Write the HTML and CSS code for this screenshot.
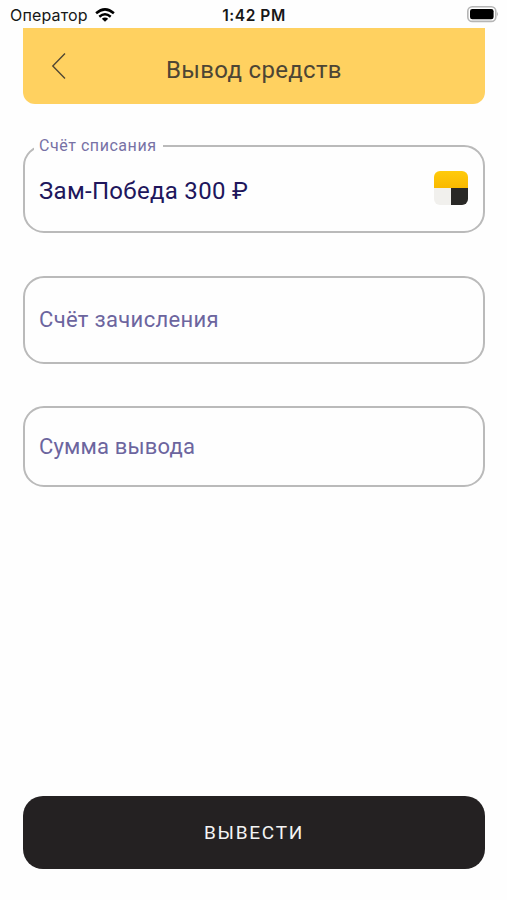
FILE: index.html
```
<!DOCTYPE html>
<html lang="ru">
<head>
<meta charset="utf-8">
<title>Вывод средств</title>
<link rel="stylesheet" href="styles.css">
</head>
<body>
<div class="status">
  <div class="carrier"><span class="carrier-name">Оператор</span>
    <svg class="wifi" width="20" height="14" viewBox="0 0 20 14"><g fill="none" stroke="#000" stroke-width="2.5"><path d="M1.1 5.3Q10-2.5 18.9 5.3"/><path d="M4.3 8.7Q10 3.9 15.7 8.7"/></g><path d="M6.8 10.7Q10 8.3 13.2 10.7L10 13.8Z"/></svg>
  </div>
  <div class="time">1:42 PM</div>
  <svg class="battery" width="32" height="17" viewBox="0 0 32 17"><rect x=".8" y=".8" width="28" height="14.6" rx="4.5" fill="#fff" stroke="#b5b5b5" stroke-width="1.6"/><rect x="3" y="3" width="23.6" height="10.2" rx="2.3"/><path d="M30.2 5.8Q32 8.1 30.2 10.4Z" fill="#aaa"/></svg>
</div>
<header class="header">
  <svg class="back" width="16" height="28" viewBox="0 0 16 28"><path d="M14 1.5 1.8 14 14 26.5" fill="none" stroke="#514733" stroke-width="1.4"/></svg>
  <h1 class="title">Вывод средств</h1>
</header>
<main class="form">
  <fieldset class="field source">
    <legend class="legend">Счёт списания</legend>
    <div class="row">
      <span class="value">Зам-Победа 300 ₽</span>
      <svg class="logo" width="34" height="34" viewBox="0 0 34 34"><defs><linearGradient id="gold" x2="0" y2="1"><stop stop-color="#ffcb0c"/><stop offset="1" stop-color="#f9b900"/></linearGradient><clipPath id="tile"><rect width="34" height="34" rx="6"/></clipPath></defs><g clip-path="url(#tile)"><path fill="url(#gold)" d="M0 0h34v17H0z"/><path fill="#f1f0ed" d="M0 17h17v17H0z"/><path fill="#292826" d="M17 17h17v17H17z"/></g></svg>
    </div>
  </fieldset>
  <div class="field target"><span class="placeholder target-text">Счёт зачисления</span></div>
  <div class="field amount"><span class="placeholder amount-text">Сумма вывода</span></div>
</main>
<button class="submit"><span class="submit-text">ВЫВЕСТИ</span></button>
</body>
</html>
```

FILE: styles.css
```
* { box-sizing: border-box; }
body {
  margin: 0;
  height: 900px;
  padding: 0 22px 31px 23px;
  display: flex;
  flex-direction: column;
  background: #fefefe;
  font-family: Roboto, "Liberation Sans", sans-serif;
}
.status {
  display: grid;
  grid-template-columns: 1fr auto 1fr;
  align-items: center;
  height: 28px;
  margin: 0 -13px;
  font: 16px/28px Inter, sans-serif;
  color: #171717;
}
.carrier { display: flex; align-items: center; gap: 7px; }
.carrier-name { letter-spacing: .15px; }
.time { font-size: 15.5px; font-weight: 600; letter-spacing: .55px; padding-top: 2px; }
.battery { justify-self: end; margin: -2px -1px 0 0; }
.header {
  height: 76px;
  display: grid;
  grid-template-columns: 60px 1fr 60px;
  align-items: center;
  background: #ffd160;
  border-radius: 0 0 12px 12px;
}
.back { margin-left: 28px; }
.title {
  margin: 7px 0 0;
  text-align: center;
  font-size: 24px;
  line-height: 32px;
  font-weight: 400;
  letter-spacing: .32px;
  color: #4d4534;
  white-space: nowrap;
}
.form { display: flex; flex-direction: column; margin-top: 33px; }
.field {
  margin: 0;
  border: 2px solid #bababa;
  border-radius: 21px;
  padding: 0 16px 0 14px;
}
.source { height: 96px; min-width: 0; padding: 0 15px 0 9px; }
.legend {
  padding: 0 6px 0 5px;
  font-size: 16px;
  line-height: 18px;
  letter-spacing: .55px;
  color: #7771a5;
}
.row { display: flex; justify-content: space-between; align-items: center; height: 65px; padding-left: 5px; }
.value { padding-top: 6px; font-size: 24px; letter-spacing: .3px; color: #20165c; }
.target { height: 88px; margin-top: 43px; display: flex; align-items: center; }
.amount { height: 81px; margin-top: 42px; display: flex; align-items: center; }
.placeholder { font-size: 22px; line-height: 30px; letter-spacing: .33px; color: #6c659e; }
.amount-text { letter-spacing: .17px; }
.submit {
  margin-top: auto;
  height: 73px;
  border: 0;
  border-radius: 20px;
  background: #242122;
  color: #f4f4f4;
  font: 400 19px/24px Roboto, sans-serif;
  letter-spacing: 1.75px;
}
```
